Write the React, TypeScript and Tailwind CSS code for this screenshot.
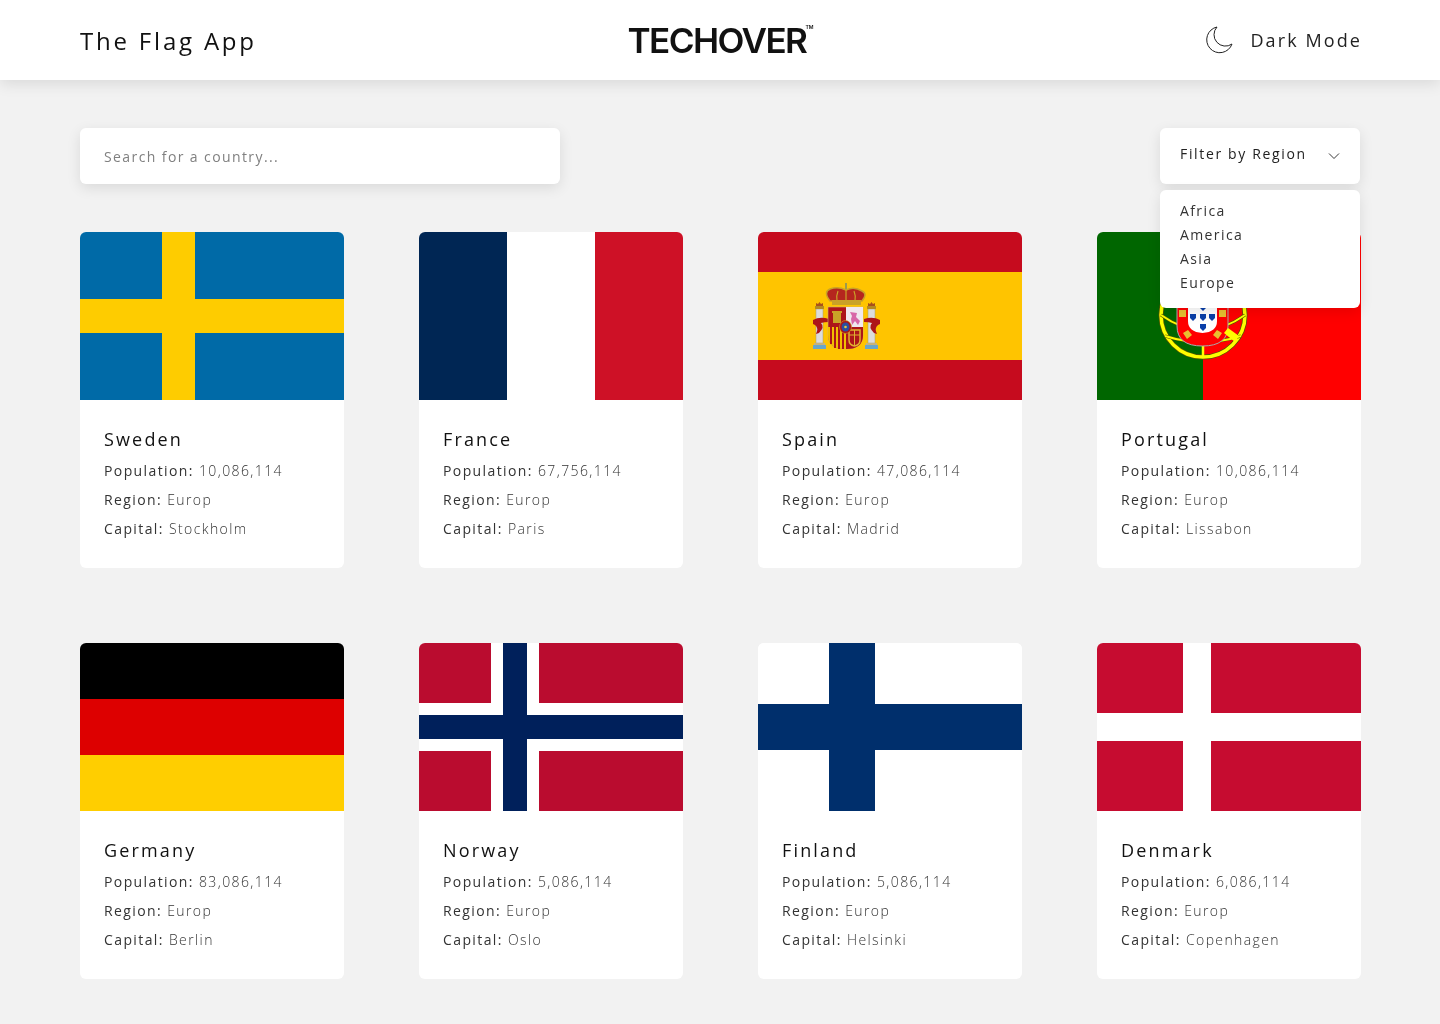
import type { ReactNode } from 'react';

function Flag({ children }: { children: ReactNode }) {
  return (
    <svg viewBox="0 0 264 168" className="block h-[168px] w-[264px]">
      {children}
    </svg>
  );
}

function Sweden() {
  return (
    <Flag>
      <rect width="264" height="168" fill="#006aa7" />
      <rect x="82" width="33" height="168" fill="#fecc00" />
      <rect y="67" width="264" height="34" fill="#fecc00" />
    </Flag>
  );
}

function France() {
  return (
    <Flag>
      <rect width="88" height="168" fill="#002654" />
      <rect x="88" width="88" height="168" fill="#ffffff" />
      <rect x="176" width="88" height="168" fill="#ce1126" />
    </Flag>
  );
}

function Spain() {
  return (
    <Flag>
      <rect width="264" height="168" fill="#c60b1e" />
      <rect y="40" width="264" height="88" fill="#ffc400" />
      {/* pillars */}
      {[58, 110].map((x) => (
        <g key={x}>
          <rect x={x} y="77" width="7" height="34" fill="#dcdcdc" stroke="#a09a70" strokeWidth="0.5" />
          <rect x={x - 1} y="74" width="9" height="3" fill="#b58a20" />
          <path d={`M${x} 74 l0-3 2 1 1.500-2 1.500 2 2-1 0 3z`} fill="#a8501c" />
          <rect x={x - 2} y="111" width="11" height="2" fill="#c8b27a" />
          <rect x={x - 3} y="113" width="13" height="4" fill="#6aa6c8" />
        </g>
      ))}
      {/* ribbons */}
      <path d="M55 88 q7-4 16-1 l0 3 q-5 0-8 1 q4 4-2 10 l-3 1 q3-6-1-9 l-2-1z" fill="#ad1519" />
      <path d="M122 88 q-7-4-16-1 l0 3 q5 0 8 1 q-4 4 2 10 l3 1 q-3-6 1-9 l2-1z" fill="#ad1519" />
      {/* crown */}
      <rect x="87" y="51" width="2" height="6" fill="#9a9a50" />
      <path d="M72 69 q-7-9 0-12 q8-3 16 1 q8-4 16 1 q6 3 0 10z" fill="#b5261e" stroke="#c9a227" strokeWidth="1.500" />
      <path d="M88 58 v11 M80 59 q-2 5-1 10 M96 59 q2 5 1 10" stroke="#c9a227" strokeWidth="1.200" fill="none" />
      <rect x="74" y="68" width="29" height="5" fill="#c9a227" />
      {/* shield */}
      <path d="M70 75 h35 v28 q0 14-17.500 14 q-17.500 0-17.500-14z" fill="#ad1519" stroke="#c8b27a" strokeWidth="0.600" />
      <rect x="88" y="75" width="17" height="20" fill="#f0e8ee" />
      <path d="M92 80 l7 1 -1 4 4 4 -2 4 -3-4 -3 4 -1-6 1-3z" fill="#d868a8" />
      <path d="M70 95 h18 v22 q-18 0-18-14z" fill="#f1bf00" />
      <path d="M73 95 v17 M77 95 v21 M81 95 v22 M85 95 v22" stroke="#ad1519" strokeWidth="2" />
      <path d="M88 95 h17 v8 q0 14-17 14z" fill="#ad1519" />
      <path d="M91 98 h11 v10 q0 5-5.500 6 q-5.500-1-5.500-6z" fill="none" stroke="#e0b030" strokeWidth="1.500" />
      <path d="M91 103 h11 M96.500 98 v16" stroke="#e0b030" strokeWidth="1" />
      <rect x="75" y="81" width="8" height="10" fill="#c9a227" />
      <rect x="74" y="79" width="10" height="2" fill="#c9a227" />
      <ellipse cx="87.500" cy="95" rx="6" ry="6.500" fill="#ad1519" stroke="#c9a227" strokeWidth="0.600" />
      <ellipse cx="87.500" cy="95" rx="4" ry="4.500" fill="#2a4fa0" />
      <circle cx="87.500" cy="95" r="1.300" fill="#e8c840" />
    </Flag>
  );
}

function Portugal() {
  return (
    <Flag>
      <rect width="106" height="168" fill="#006600" />
      <rect x="106" width="158" height="168" fill="#ff0000" />
      <circle cx="106" cy="83" r="42" fill="none" stroke="#555500" strokeWidth="5" />
      <circle cx="106" cy="83" r="42" fill="none" stroke="#ffff00" strokeWidth="3.500" />
      <path d="M64 83 q42 30 84 0" fill="none" stroke="#555500" strokeWidth="3" />
      <path d="M64 83 q42 30 84 0" fill="none" stroke="#ffff00" strokeWidth="2" />
      <path d="M68 104 q38 12 76 0" fill="none" stroke="#555500" strokeWidth="3" />
      <path d="M68 104 q38 12 76 0" fill="none" stroke="#ffff00" strokeWidth="2" />
      <path d="M106 110 v15" stroke="#ffff00" strokeWidth="2.500" />
      <path d="M80 50 v44 q0 20 25.500 20 q25.500 0 25.500-20 v-44z" fill="#ff0000" stroke="#aaaaaa" strokeWidth="1" />
      <path d="M91 55 v34 q0 11 14.500 12 q14.500-1 14.500-12 v-34z" fill="#ffffff" />
      {[
        [96, 85],
        [106, 85],
        [115, 85],
        [106, 95],
        [106, 75],
      ].map(([x, y]) => (
        <path key={`${x}-${y}`} d={`M${x - 3} ${y - 3} h6 v4 l-3 3 -3-3z`} fill="#0a3fa8" />
      ))}
      <rect x="82" y="78" width="7" height="7" fill="#e8c030" />
      <rect x="122" y="78" width="7" height="7" fill="#e8c030" />
      <path d="M86 101 l5-3 4 5-5 4z M125 101 l-5-3-4 5 5 4z" fill="#e8c030" />
      <path d="M131 96 l11 8-4 6-11-9z" fill="#ffff00" />
    </Flag>
  );
}

function Germany() {
  return (
    <Flag>
      <rect width="264" height="56" fill="#000000" />
      <rect y="56" width="264" height="56" fill="#dd0000" />
      <rect y="112" width="264" height="56" fill="#ffce00" />
    </Flag>
  );
}

function Norway() {
  return (
    <Flag>
      <rect width="264" height="168" fill="#ba0c2f" />
      <rect x="72" width="48" height="168" fill="#ffffff" />
      <rect y="60" width="264" height="48" fill="#ffffff" />
      <rect x="84" width="24" height="168" fill="#00205b" />
      <rect y="72" width="264" height="24" fill="#00205b" />
    </Flag>
  );
}

function Finland() {
  return (
    <Flag>
      <rect width="264" height="168" fill="#ffffff" />
      <rect x="71" width="46" height="168" fill="#002f6c" />
      <rect y="61" width="264" height="46" fill="#002f6c" />
    </Flag>
  );
}

function Denmark() {
  return (
    <Flag>
      <rect width="264" height="168" fill="#c60c30" />
      <rect x="86" width="28" height="168" fill="#ffffff" />
      <rect y="70" width="264" height="28" fill="#ffffff" />
    </Flag>
  );
}

const countries = [
  { name: 'Sweden', population: '10,086,114', capital: 'Stockholm', flag: <Sweden /> },
  { name: 'France', population: '67,756,114', capital: 'Paris', flag: <France /> },
  { name: 'Spain', population: '47,086,114', capital: 'Madrid', flag: <Spain /> },
  { name: 'Portugal', population: '10,086,114', capital: 'Lissabon', flag: <Portugal /> },
  { name: 'Germany', population: '83,086,114', capital: 'Berlin', flag: <Germany /> },
  { name: 'Norway', population: '5,086,114', capital: 'Oslo', flag: <Norway /> },
  { name: 'Finland', population: '5,086,114', capital: 'Helsinki', flag: <Finland /> },
  { name: 'Denmark', population: '6,086,114', capital: 'Copenhagen', flag: <Denmark /> },
];

function Info({ label, value }: { label: string; value: string }) {
  return (
    <p className="h-[29px] text-[14px] leading-[29px] tracking-[1.400px] text-[#333]">
      {label}: <span className="font-light">{value}</span>
    </p>
  );
}

function CountryCard({ name, population, capital, flag }: (typeof countries)[number]) {
  return (
    <div className="h-[336px] w-[264px] overflow-hidden rounded-[6px] bg-white">
      {flag}
      <div className="px-6 pt-[25px]">
        <h2 className="mb-[3px] text-[18px] leading-[28px] font-medium tracking-[2.150px] text-[#111]">{name}</h2>
        <Info label="Population" value={population} />
        <Info label="Region" value="Europ" />
        <Info label="Capital" value={capital} />
      </div>
    </div>
  );
}

export default function App() {
  return (
    <div className="min-h-[1024px] overflow-hidden bg-[#f2f2f2] font-['Open_Sans',sans-serif]">
      <header className="flex h-20 items-center justify-between bg-white px-20 shadow-[0_4px_14px_rgba(0,0,0,0.1)] [will-change:transform]">
        <h1 className="mt-[2px] w-[300px] text-[24px] font-medium tracking-[2.800px] text-[#111]">The Flag App</h1>
        <div className="relative mt-[2px] mr-[6px] scale-x-[1.03] font-['Inter',sans-serif] text-[34px] leading-none font-semibold tracking-[-1.500px] text-[#111]">
          TECHOVER
          <span className="absolute top-0 -right-[7px] text-[5px] leading-[7px] tracking-normal">TM</span>
        </div>
        <div className="flex w-[300px] items-center justify-end gap-[17px]">
          <svg viewBox="0 0 28 28" className="h-7 w-7" fill="none" stroke="#222" strokeWidth="1">
            <path d="M12 1A13 13 0 1 0 27 18A11.400 11.400 0 0 1 12 1Z" />
          </svg>
          <span className="-mr-[2px] text-[18px] font-medium tracking-[2.100px] text-[#222]">Dark Mode</span>
        </div>
      </header>

      <main className="px-20 pt-12 [will-change:transform]">
        <div className="relative flex items-start justify-between">
          <div className="flex h-14 w-[480px] items-center rounded-[6px] bg-white px-6 shadow-[0_4px_14px_rgba(0,0,0,0.1)]">
            <span className="text-[14px] tracking-[1.400px] text-[#808080]">Search for a country...</span>
          </div>
          <div className="relative h-14 w-[200px]">
            <div className="flex h-14 items-start justify-between rounded-[6px] bg-white pt-4 pr-5 pl-5 shadow-[0_4px_14px_rgba(0,0,0,0.1)]">
              <span className="text-[14px] leading-5 font-medium tracking-[1.650px] text-[#222]">Filter by Region</span>
              <svg viewBox="0 0 12 8" className="mt-[8px] h-2 w-3" fill="none" stroke="#222" strokeWidth="0.9">
                <path d="M1 1.500L6 6.500L11 1.500" />
              </svg>
            </div>
            <ul className="absolute top-[62px] left-0 z-10 h-[118px] w-[200px] rounded-[6px] bg-white pt-[9px] pl-5 text-[14px] leading-6 tracking-[1.400px] text-[#333] shadow-[0_4px_14px_rgba(0,0,0,0.1)]">
              <li>Africa</li>
              <li>America</li>
              <li>Asia</li>
              <li>Europe</li>
            </ul>
          </div>
        </div>

        <div className="mt-12 grid grid-cols-[repeat(4,264px)] gap-[75px]">
          {countries.map((country) => (
            <CountryCard key={country.name} {...country} />
          ))}
        </div>
      </main>
    </div>
  );
}
